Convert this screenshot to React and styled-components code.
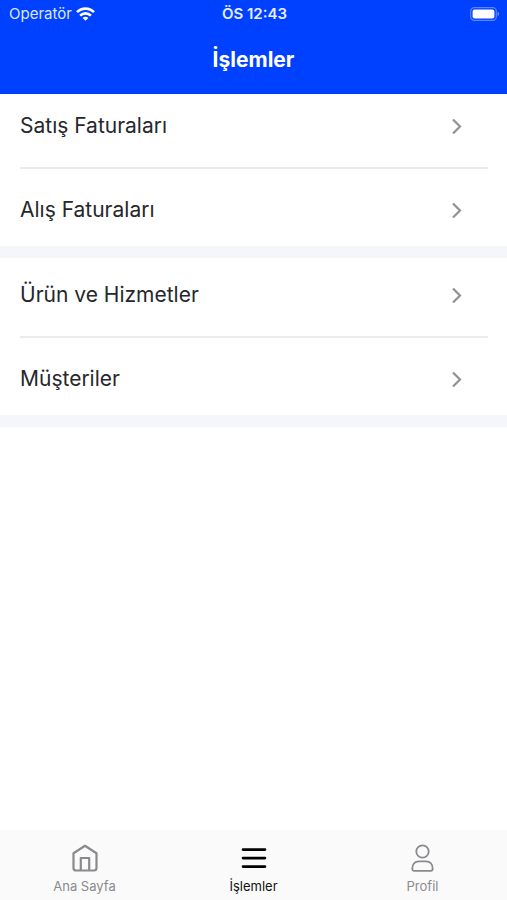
import React, { useState } from "react";
import styled, { createGlobalStyle } from "styled-components";

const GlobalStyle = createGlobalStyle`
  * {
    box-sizing: border-box;
  }

  body {
    margin: 0;
    background-color: #ffffff;
    color: #26272b;
    font-family: Inter, "Liberation Sans", sans-serif;
  }

  button {
    border: none;
    background: none;
    font-family: inherit;
    cursor: pointer;
  }
`;

const Screen = styled.div`
  min-height: 100vh;
  display: flex;
  flex-direction: column;
`;

const Header = styled.header`
  background-color: #0040ff;
  color: #ffffff;
  padding-bottom: 20px;
`;

const StatusBar = styled.div`
  height: 28px;
  padding: 0 7px 0 9px;
  display: grid;
  grid-template-columns: 1fr auto 1fr;
  align-items: center;
  font-size: 15px;
  line-height: 20px;
`;

const Carrier = styled.div`
  display: flex;
  align-items: center;
  gap: 4px;
  color: #dce6ff;
`;

const Clock = styled.div`
  font-weight: 600;
  color: #e6edff;
`;

const Battery = styled.div`
  display: flex;
  justify-content: flex-end;
`;

const Title = styled.h1`
  margin: 18px 0 0;
  font-size: 21px;
  line-height: 28px;
  font-weight: 700;
  text-align: center;
`;

const Content = styled.main`
  flex: 1;
`;

const Group = styled.section`
  padding: ${({ $first }) => ($first ? "19px" : "24px")} 19px 24px 20px;
  border-bottom: 12px solid #f5f6fa;
`;

const Row = styled.button`
  width: 100%;
  padding: 0 25px 0 0;
  display: flex;
  justify-content: space-between;
  align-items: center;
  color: inherit;
  font-size: 21px;
  line-height: 25px;
  text-align: left;
`;

const Divider = styled.hr`
  height: 2px;
  margin: 29px 0 28px;
  border: none;
  background-color: #ebebeb;
`;

const TabBar = styled.nav`
  position: sticky;
  bottom: 0;
  height: 70px;
  display: grid;
  grid-template-columns: repeat(3, 1fr);
  background-color: #fafafa;
`;

const Tab = styled.button`
  padding: 13px 0 4px;
  display: flex;
  flex-direction: column;
  align-items: center;
  gap: 4px;
  color: ${({ $active }) => ($active ? "#111111" : "#8a8a8e")};
  font-size: 13px;
  line-height: 18px;
`;

const WifiIcon = () => (
  <svg width="19" height="14" viewBox="0 0 19 14" fill="none" stroke="#ffffff" strokeWidth="2.6">
    <path d="M1 5.2C5.8 0.4 13.2 0.4 18 5.2" />
    <path d="M4.1 8.6C7.1 5.6 11.9 5.6 14.9 8.6" />
    <path d="M6.6 11C8.3 9.4 10.7 9.4 12.4 11L9.5 13.8Z" fill="#ffffff" stroke="none" />
  </svg>
);

const BatteryIcon = () => (
  <svg width="30" height="14" viewBox="0 0 30 14" fill="none">
    <rect x="0.7" y="0.7" width="25.6" height="12.6" rx="3.6" stroke="#5c84ff" strokeWidth="1.2" />
    <rect x="2.6" y="2.6" width="21.8" height="8.8" rx="2" fill="#ffffff" />
    <path d="M27.6 4.8C29.4 5.4 29.4 8.6 27.6 9.2Z" fill="#7899ff" />
  </svg>
);

const ChevronIcon = () => (
  <svg width="12" height="17" viewBox="0 0 12 17" fill="none" stroke="#929292" strokeWidth="2.2">
    <path d="M2 2.5L9 9.5L2 16.5" />
  </svg>
);

const HomeIcon = () => (
  <svg
    width="28"
    height="30"
    viewBox="0 0 28 30"
    fill="none"
    stroke="currentColor"
    strokeWidth="2.2"
    strokeLinejoin="round"
  >
    <path d="M2.5 10.2L14 2.8L25.5 10.2V25C25.5 26.6 24.6 27.5 23 27.5H5C3.4 27.5 2.5 26.6 2.5 25Z" />
    <path d="M9.8 27V15H18.2V27" />
  </svg>
);

const MenuIcon = () => (
  <svg
    width="28"
    height="30"
    viewBox="0 0 28 30"
    fill="none"
    stroke="#000000"
    strokeWidth="2.6"
    strokeLinecap="round"
  >
    <path d="M3 6.6H25M3 15.1H25M3 23.6H25" />
  </svg>
);

const ProfileIcon = () => (
  <svg width="28" height="30" viewBox="0 0 28 30" fill="none" stroke="currentColor" strokeWidth="1.8">
    <circle cx="13.5" cy="8.5" r="6.2" />
    <path d="M3.3 25.8C3.3 21.4 5.9 18.4 9.9 18.4H17.1C21.1 18.4 23.7 21.4 23.7 25.8C23.7 27 23.1 27.8 21.9 27.8H5.1C3.9 27.8 3.3 27 3.3 25.8Z" />
  </svg>
);

const groups = [
  ["Satış Faturaları", "Alış Faturaları"],
  ["Ürün ve Hizmetler", "Müşteriler"],
];

const tabs = [
  { name: "Ana Sayfa", Icon: HomeIcon },
  { name: "İşlemler", Icon: MenuIcon },
  { name: "Profil", Icon: ProfileIcon },
];

function App() {
  const [activeTab, setActiveTab] = useState("İşlemler");

  return (
    <Screen lang="tr">
      <GlobalStyle />
      <Header>
        <StatusBar>
          <Carrier>
            Operatör
            <WifiIcon />
          </Carrier>
          <Clock>ÖS 12:43</Clock>
          <Battery>
            <BatteryIcon />
          </Battery>
        </StatusBar>
        <Title>İşlemler</Title>
      </Header>
      <Content>
        {groups.map((items, index) => (
          <Group key={items[0]} $first={index === 0}>
            {items.map((item, i) => (
              <React.Fragment key={item}>
                {i > 0 && <Divider />}
                <Row type="button">
                  {item}
                  <ChevronIcon />
                </Row>
              </React.Fragment>
            ))}
          </Group>
        ))}
      </Content>
      <TabBar>
        {tabs.map(({ name, Icon }) => (
          <Tab
            key={name}
            type="button"
            $active={name === activeTab}
            onClick={() => setActiveTab(name)}
          >
            <Icon />
            {name}
          </Tab>
        ))}
      </TabBar>
    </Screen>
  );
}

export default App;
